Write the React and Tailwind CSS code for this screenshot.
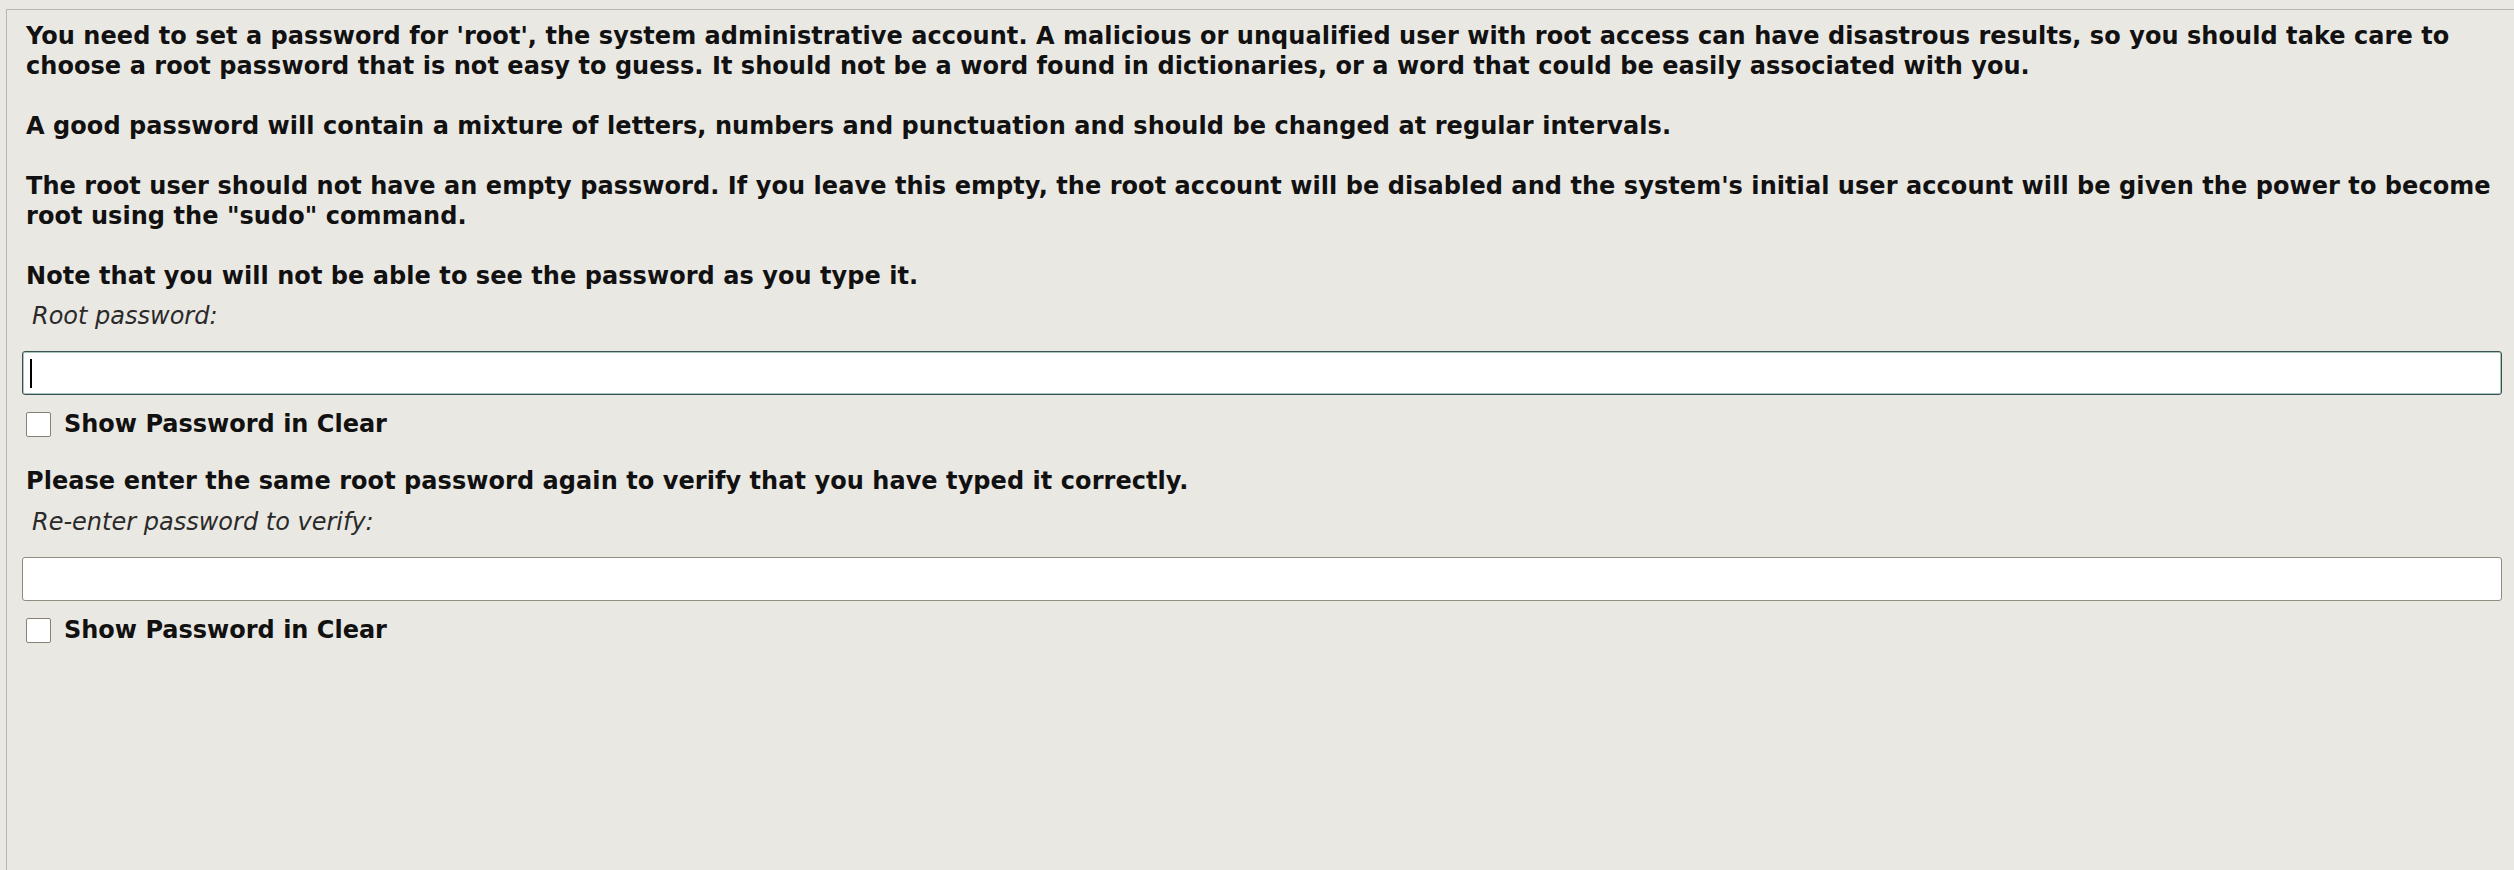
import React from 'react';

function CheckRow({ label, className }) {
  return (
    <div className={`flex items-center h-[30px] pl-[4px] ${className}`}>
      <div className="w-[25px] h-[25px] border border-[#858176] rounded-[2px] bg-white shrink-0" />
      <span className="ml-[13px] font-bold text-[#111]">{label}</span>
    </div>
  );
}

export default function App() {
  return (
    <div className="min-h-screen bg-[#eae8e3] pt-[9px] pl-[6px] overflow-hidden">
      <div className="h-[861px] border-t border-l border-[#bcb7ad] pt-[11px] pl-[15px] pr-[12px] font-['DejaVu_Sans',sans-serif] text-[24px] leading-[30px] text-[#111]">
        <div className="pl-[4px] font-bold tracking-[0.06px]">
          <p>
            You need to set a password for 'root', the system administrative account. A malicious or unqualified user with root access can have disastrous results, so you should take care to choose a root password that is not easy to guess. It should not be a word found in dictionaries, or a word that could be easily associated with you.
          </p>
          <p className="mt-[30px]">
            A good password will contain a mixture of letters, numbers and punctuation and should be changed at regular intervals.
          </p>
          <p className="mt-[30px]">
            The root user should not have an empty password. If you leave this empty, the root account will be disabled and the system's initial user account will be given the power to become root using the "sudo" command.
          </p>
          <p className="mt-[30px]">Note that you will not be able to see the password as you type it.</p>
        </div>

        <div className="mt-[10px] pl-[10px] italic text-[#2a2a2a]">Root password:</div>

        <div className="mt-[20px] h-[44px] rounded-[3px] border border-[#3b524f] bg-white shadow-[inset_0_0_0_1px_#a7c4c0] flex items-center pl-[7px]">
          <div className="w-[2px] h-[29px] bg-black" />
        </div>

        <CheckRow label="Show Password in Clear" className="mt-[14px]" />

        <p className="mt-[27px] pl-[4px] font-bold tracking-[0.06px]">
          Please enter the same root password again to verify that you have typed it correctly.
        </p>

        <div className="mt-[11px] pl-[10px] italic text-[#2a2a2a]">Re-enter password to verify:</div>

        <div className="mt-[20px] h-[44px] rounded-[3px] border border-[#918c80] bg-white" />

        <CheckRow label="Show Password in Clear" className="mt-[14px]" />
      </div>
    </div>
  );
}
